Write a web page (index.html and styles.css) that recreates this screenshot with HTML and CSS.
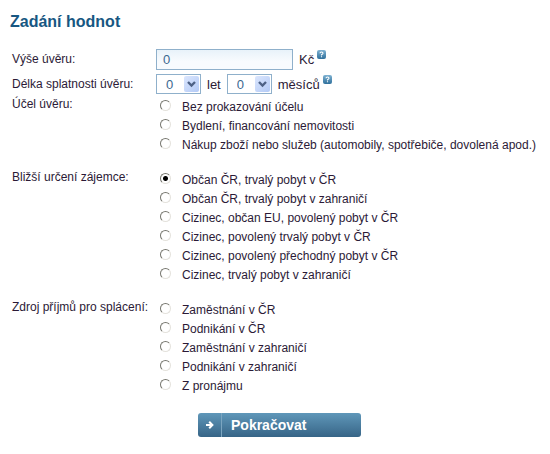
FILE: index.html
```html
<!DOCTYPE html>
<html lang="cs">
<head>
<meta charset="utf-8">
<title>Zadání hodnot</title>
<link rel="stylesheet" href="styles.css">
</head>
<body>
<svg class="defs" width="0" height="0" aria-hidden="true">
  <defs>
    <linearGradient id="help-fill" x1="0" y1="0" x2="0" y2="1">
      <stop offset="0" stop-color="#7fb2d2"/>
      <stop offset="1" stop-color="#2f709c"/>
    </linearGradient>
    <symbol id="help" viewBox="0 0 9 9">
      <rect width="9" height="9" rx="2" fill="url(#help-fill)"/>
      <path d="M3 3.3Q3 2 4.5 2T6 3.3Q6 4 4.5 4.7V5.4M4.5 6.3V7.3" fill="none" stroke="#fff" stroke-width="1.1"/>
    </symbol>
    <symbol id="chevron" viewBox="0 0 15 15">
      <path d="M4 5.5L7.5 9L11 5.5" fill="none" stroke="#4d6185" stroke-width="2.4"/>
    </symbol>
  </defs>
</svg>
<form class="loan">
  <h1 class="title">Zadání hodnot</h1>

  <div class="row row-amount">
    <label class="caption" for="amount">Výše úvěru:</label>
    <div class="controls">
      <input class="field amount" id="amount" type="text" value="0">
      <span class="unit">Kč</span>
      <svg class="help" role="img" aria-label="Nápověda"><use href="#help"/></svg>
    </div>
  </div>

  <div class="row row-term">
    <label class="caption" for="years">Délka splatnosti úvěru:</label>
    <div class="controls">
      <span class="picker">
        <select class="field" id="years"><option>0</option></select>
        <svg class="arrow" aria-hidden="true"><use href="#chevron"/></svg>
      </span>
      <label class="unit" for="years">let</label>
      <span class="picker">
        <select class="field" id="months"><option>0</option></select>
        <svg class="arrow" aria-hidden="true"><use href="#chevron"/></svg>
      </span>
      <label class="unit" for="months">měsíců</label>
      <svg class="help" role="img" aria-label="Nápověda"><use href="#help"/></svg>
    </div>
  </div>

  <div class="row group" role="radiogroup" aria-labelledby="purpose">
    <span class="caption" id="purpose">Účel úvěru:</span>
    <div class="options">
      <label class="option"><input type="radio" name="purpose">Bez prokazování účelu</label>
      <label class="option"><input type="radio" name="purpose">Bydlení, financování nemovitosti</label>
      <label class="option"><input type="radio" name="purpose">Nákup zboží nebo služeb (automobily, spotřebiče, dovolená apod.)</label>
    </div>
  </div>

  <div class="row group" role="radiogroup" aria-labelledby="applicant">
    <span class="caption" id="applicant">Bližší určení zájemce:</span>
    <div class="options">
      <label class="option"><input type="radio" name="applicant" checked>Občan ČR, trvalý pobyt v ČR</label>
      <label class="option"><input type="radio" name="applicant">Občan ČR, trvalý pobyt v zahraničí</label>
      <label class="option"><input type="radio" name="applicant">Cizinec, občan EU, povolený pobyt v ČR</label>
      <label class="option"><input type="radio" name="applicant">Cizinec, povolený trvalý pobyt v ČR</label>
      <label class="option"><input type="radio" name="applicant">Cizinec, povolený přechodný pobyt v ČR</label>
      <label class="option"><input type="radio" name="applicant">Cizinec, trvalý pobyt v zahraničí</label>
    </div>
  </div>

  <div class="row group" role="radiogroup" aria-labelledby="income">
    <span class="caption" id="income">Zdroj příjmů pro splácení:</span>
    <div class="options">
      <label class="option"><input type="radio" name="income">Zaměstnání v ČR</label>
      <label class="option"><input type="radio" name="income">Podnikání v ČR</label>
      <label class="option"><input type="radio" name="income">Zaměstnání v zahraničí</label>
      <label class="option"><input type="radio" name="income">Podnikání v zahraničí</label>
      <label class="option"><input type="radio" name="income">Z pronájmu</label>
    </div>
  </div>

  <button class="submit" type="submit">
    <span class="submit-icon">
      <svg width="8" height="8" viewBox="0 0 8 8" aria-hidden="true"><path d="M0 4H6M3.2 .8L6.4 4L3.2 7.2" fill="none" stroke="#fff" stroke-width="2"/></svg>
    </span>
    <span class="submit-text">Pokračovat</span>
  </button>
</form>
</body>
</html>
```

FILE: styles.css
```css
* {
  box-sizing: border-box;
}

body {
  margin: 0;
  background: #fff;
  color: #2b1a36;
  font: 12px/19px "Liberation Sans", Arial, sans-serif;
}

.defs {
  position: absolute;
}

.loan {
  padding: 12px 0 0 12px;
}

.title {
  margin: 0 0 17px -2px;
  color: #175782;
  font-size: 16px;
  line-height: 20px;
}

.row {
  display: grid;
  grid-template-columns: 144px 1fr;
}

.row-amount,
.row-term {
  align-items: center;
}

.row-amount {
  margin-bottom: 4px;
}

.row-term {
  margin-bottom: 1px;
}

.caption {
  white-space: nowrap;
}

.controls {
  display: flex;
  align-items: center;
}

.field {
  appearance: none;
  display: block;
  margin: 0;
  border: 1px solid #8fb0cb;
  border-radius: 0;
  background: #fff;
  color: #3c6890;
  font: inherit;
  font-size: 13px;
}

.amount {
  width: 137px;
  height: 21px;
  padding: 0 6px;
  background: linear-gradient(#e8f2f9, #f8fbfe 60%);
}

.picker {
  position: relative;
  width: 45px;
}

.picker .field {
  width: 100%;
  height: 20px;
  padding: 0 9px;
}

.arrow {
  position: absolute;
  top: 2px;
  right: 2px;
  width: 15px;
  height: 16px;
  border-radius: 2px;
  background: linear-gradient(135deg, #dbe6fd, #b3caf6);
  pointer-events: none;
}

.unit {
  margin: 0 6px;
  font-size: 13px;
}

.help {
  align-self: flex-start;
  width: 9px;
  height: 9px;
  margin: 1px 0 0 -3px;
}

.group {
  margin-bottom: 13px;
}

.options {
  padding-top: 3px;
}

.option {
  display: flex;
  align-items: center;
  white-space: nowrap;
}

.option input {
  appearance: none;
  flex: none;
  width: 11px;
  height: 11px;
  margin: 0 11px 4px 4px;
  border: 1px solid;
  border-color: #77776f #e4e2dc #e4e2dc #77776f;
  border-radius: 50%;
  background: #fff;
}

.option input:checked {
  background: radial-gradient(circle, #000 2px, #fff 3px);
}

.submit {
  display: flex;
  align-items: center;
  width: 163px;
  height: 24px;
  margin: 17px 0 0 186px;
  padding: 0;
  border: 0;
  border-radius: 3px;
  background: linear-gradient(#5f97b9, #376587);
  color: #fff;
  font: bold 14px/24px "Liberation Sans", Arial, sans-serif;
}

.submit-icon {
  display: flex;
  align-items: center;
  justify-content: center;
  width: 24px;
  height: 24px;
  border-right: 1px solid #7ba5c0;
}

.submit-text {
  padding-left: 9px;
}
```
